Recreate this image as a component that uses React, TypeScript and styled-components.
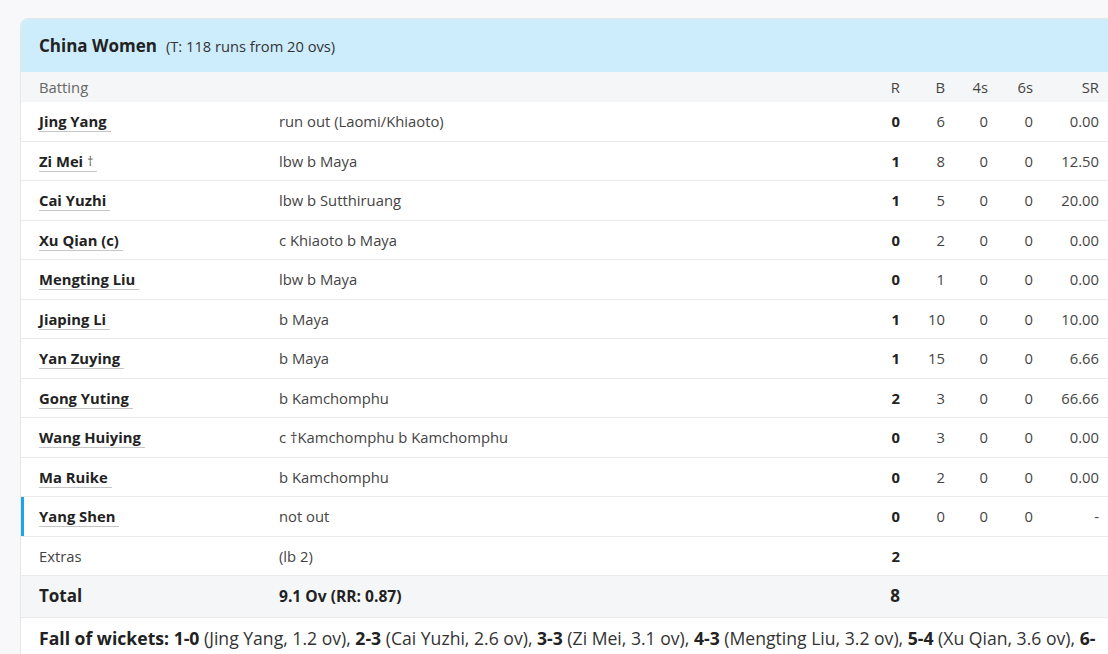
import React from 'react'
import styled, { createGlobalStyle } from 'styled-components'

const GlobalStyle = createGlobalStyle`
    html, body {
        margin: 0;
        padding: 0;
        overflow: hidden;
        background: #f8f8fa;
        font-family: "Open Sans", "Liberation Sans", sans-serif;
        color: #222;
    }
`

const Page = styled.div`
    padding: 18px 0 0 20px;
`

const Card = styled.div`
    width: calc(100% + 12px);
    background: #fff;
    border: 1px solid #e4e6e8;
    border-radius: 8px 8px 0 0;
    overflow: hidden;
    box-sizing: border-box;
`

const CardHeader = styled.div`
    background: #cdedfc;
    height: 53px;
    display: flex;
    align-items: center;
    gap: 9px;
    padding-left: 18px;
`

const TeamName = styled.span`
    font-size: 17px;
    font-weight: 700;
    color: #222;
`

const Target = styled.span`
    font-size: 14.7px;
    color: #333;
`

const Row = styled.div<{ $variant?: 'head' | 'total' | 'normal'; $active?: boolean }>`
    display: grid;
    grid-template-columns: 240px 1fr 40px 45px 43px 45px 66px;
    align-items: center;
    padding: 0 20px 0 18px;
    font-size: 14.8px;
    line-height: 22.4px;
    box-sizing: border-box;
    height: ${p => (p.$variant === 'head' ? '30px' : p.$variant === 'total' ? '42px' : '39.5px')};
    background: ${p => (p.$variant === 'normal' ? '#fff' : '#f5f6f7')};
    color: ${p => (p.$variant === 'head' ? '#666' : '#333')};
    border-bottom: ${p => (p.$variant === 'head' ? 'none' : '1px solid #e9eaec')};
    box-shadow: ${p => (p.$active ? 'inset 3px 0 0 #1ea5e9' : 'none')};
`

const Num = styled.span<{ $bold?: boolean; $big?: boolean }>`
    text-align: right;
    font-weight: ${p => (p.$bold ? 700 : 400)};
    font-size: ${p => (p.$big ? '17px' : '14.8px')};
    color: ${p => (p.$bold ? '#222' : '#444')};
`

const Name = styled.span`
    font-weight: 700;
    color: #222;
    border-bottom: 1px solid #c4c6c8;
    padding-right: 4px;
    line-height: 19px;
`

const Plain = styled.span<{ $bold?: boolean; $big?: boolean }>`
    font-weight: ${p => (p.$bold ? 700 : 400)};
    font-size: ${p => (p.$big ? '17px' : p.$bold ? '15.6px' : '14.8px')};
    color: ${p => (p.$bold ? '#222' : '#444')};
`

const Dagger = styled.span`
    font-weight: 400;
    font-size: 12px;
    margin-left: 4px;
    color: #555;
    vertical-align: 1px;
`

const Fow = styled.div`
    padding: 8px 20px 0 18px;
    font-size: 17.6px;
    line-height: 25px;
    color: #333;
    b {
        color: #222;
    }
`

type Batter = {
    name: string
    keeper?: boolean
    how: string
    r: number
    b: number
    f: number
    s: number
    sr: string
    active?: boolean
}

const batters: Batter[] = [
    { name: 'Jing Yang', how: 'run out (Laomi/Khiaoto)', r: 0, b: 6, f: 0, s: 0, sr: '0.00' },
    { name: 'Zi Mei', keeper: true, how: 'lbw b Maya', r: 1, b: 8, f: 0, s: 0, sr: '12.50' },
    { name: 'Cai Yuzhi', how: 'lbw b Sutthiruang', r: 1, b: 5, f: 0, s: 0, sr: '20.00' },
    { name: 'Xu Qian (c)', how: 'c Khiaoto b Maya', r: 0, b: 2, f: 0, s: 0, sr: '0.00' },
    { name: 'Mengting Liu', how: 'lbw b Maya', r: 0, b: 1, f: 0, s: 0, sr: '0.00' },
    { name: 'Jiaping Li', how: 'b Maya', r: 1, b: 10, f: 0, s: 0, sr: '10.00' },
    { name: 'Yan Zuying', how: 'b Maya', r: 1, b: 15, f: 0, s: 0, sr: '6.66' },
    { name: 'Gong Yuting', how: 'b Kamchomphu', r: 2, b: 3, f: 0, s: 0, sr: '66.66' },
    { name: 'Wang Huiying', how: 'c †Kamchomphu b Kamchomphu', r: 0, b: 3, f: 0, s: 0, sr: '0.00' },
    { name: 'Ma Ruike', how: 'b Kamchomphu', r: 0, b: 2, f: 0, s: 0, sr: '0.00' },
    { name: 'Yang Shen', how: 'not out', r: 0, b: 0, f: 0, s: 0, sr: '-', active: true },
]

const wickets = [
    ['1-0', 'Jing Yang, 1.2 ov'],
    ['2-3', 'Cai Yuzhi, 2.6 ov'],
    ['3-3', 'Zi Mei, 3.1 ov'],
    ['4-3', 'Mengting Liu, 3.2 ov'],
    ['5-4', 'Xu Qian, 3.6 ov'],
    ['6-5', 'Jiaping Li, 5.6 ov'],
    ['7-8', 'Gong Yuting, 8.1 ov'],
    ['8-8', 'Wang Huiying, 8.4 ov'],
    ['9-8', 'Ma Ruike, 8.6 ov'],
    ['10-8', 'Yan Zuying, 9.1 ov'],
]

const App = () => {
    return (
        <Page>
            <GlobalStyle />
            <Card>
                <CardHeader>
                    <TeamName>China Women</TeamName>
                    <Target>(T: 118 runs from 20 ovs)</Target>
                </CardHeader>
                <Row $variant="head">
                    <span>Batting</span>
                    <span />
                    <Num>R</Num>
                    <Num>B</Num>
                    <Num>4s</Num>
                    <Num>6s</Num>
                    <Num>SR</Num>
                </Row>
                {batters.map(b => (
                    <Row key={b.name} $variant="normal" $active={b.active}>
                        <span>
                            <Name>
                                {b.name}
                                {b.keeper && <Dagger>†</Dagger>}
                            </Name>
                        </span>
                        <Plain>{b.how}</Plain>
                        <Num $bold>{b.r}</Num>
                        <Num>{b.b}</Num>
                        <Num>{b.f}</Num>
                        <Num>{b.s}</Num>
                        <Num>{b.sr}</Num>
                    </Row>
                ))}
                <Row $variant="normal">
                    <Plain>Extras</Plain>
                    <Plain>(lb 2)</Plain>
                    <Num $bold>2</Num>
                </Row>
                <Row $variant="total">
                    <Plain $bold $big>Total</Plain>
                    <Plain $bold>9.1 Ov (RR: 0.87)</Plain>
                    <Num $bold $big>8</Num>
                </Row>
                <Fow>
                    <b>Fall of wickets: </b>
                    {wickets.map(([score, who], i) => (
                        <React.Fragment key={score}>
                            <b>{score}</b> ({who}){i < wickets.length - 1 ? ', ' : ''}
                        </React.Fragment>
                    ))}
                </Fow>
            </Card>
        </Page>
    )
}

export default App
